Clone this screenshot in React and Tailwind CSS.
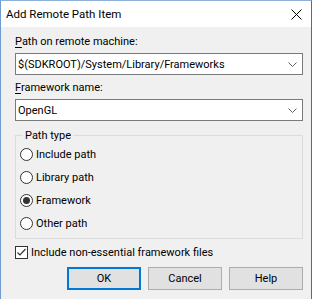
import { useState } from "react";

/* ================= SMALL CONTROLS ================= */

const Chevron = () => (
  <svg width="9" height="5" viewBox="0 0 9 5" className="shrink-0">
    <path d="M0.5 0.5 L4.5 4.5 L8.5 0.5" fill="none" stroke="#606060" strokeWidth="1" />
  </svg>
);

const ComboBox = ({ value }) => (
  <div className="h-[22px] flex items-center justify-between border border-[#7a7a7a] bg-white pl-[2px] pr-[5px]">
    <span className="truncate">{value}</span>
    <Chevron />
  </div>
);

const Radio = ({ label, checked, onClick }) => (
  <div className="h-[23px] flex items-center gap-[3px]" onClick={onClick}>
    <span className="w-[13px] h-[13px] rounded-full border border-[#333333] bg-white flex items-center justify-center shrink-0">
      {checked && <span className="w-[7px] h-[7px] rounded-full bg-[#333333]" />}
    </span>
    <span>{label}</span>
  </div>
);

const Button = ({ children, primary }) => (
  <div
    className={`w-[74px] h-[23px] flex items-center justify-center bg-[#e1e1e1] ${
      primary ? "border-2 border-[#0078d7]" : "border border-[#adadad]"
    }`}
  >
    {children}
  </div>
);

/* ================= DIALOG ================= */

export default function App() {
  const [pathType, setPathType] = useState("framework");
  const [nonEssential, setNonEssential] = useState(true);

  const types = [
    { id: "include", label: "Include path" },
    { id: "library", label: "Library path" },
    { id: "framework", label: "Framework" },
    { id: "other", label: "Other path" },
  ];

  return (
    <div
      className="w-[313px] h-[299px] overflow-hidden bg-white flex text-[11px] leading-[15px] text-black"
      style={{ fontFamily: 'Roboto, "Noto Sans", sans-serif' }}
    >
      <div className="w-[312px] h-[299px] flex flex-col border-l border-t border-r border-l-[#6f9bd0] border-t-[#8fb0d8] border-r-[#1e78d7]">
        {/* TITLE BAR */}
        <div className="h-[26px] bg-white flex items-center justify-between pl-[5px] pr-[9px] shrink-0">
          <span className="text-[11.5px] pt-[1px]">Add Remote Path Item</span>
          <svg width="11" height="11" viewBox="0 0 11 11">
            <path d="M0.5 0.5 L10.5 10.5 M10.5 0.5 L0.5 10.5" stroke="#000" strokeWidth="1" />
          </svg>
        </div>

        {/* BODY */}
        <div className="flex-1 bg-[#f0f0f0] pl-[14px] pr-[8px] pt-[7px] flex flex-col">
          <div className="mb-[4px]">
            <span className="underline underline-offset-2">P</span>ath on remote machine:
          </div>
          <ComboBox value="$(SDKROOT)/System/Library/Frameworks" />

          <div className="mt-[5px] mb-[4px]">
            <span className="underline underline-offset-2">F</span>ramework name:
          </div>
          <ComboBox value="OpenGL" />

          <fieldset className="mt-[7px] border border-[#dcdcdc] pl-[4px] pb-[3px]">
            <legend className="ml-[3px] px-[2px]">Path type</legend>
            {types.map((t) => (
              <Radio
                key={t.id}
                label={t.label}
                checked={pathType === t.id}
                onClick={() => setPathType(t.id)}
              />
            ))}
          </fieldset>

          <div
            className="mt-[7px] h-[13px] flex items-center gap-[3px]"
            onClick={() => setNonEssential(!nonEssential)}
          >
            <span className="w-[13px] h-[13px] border border-[#333333] bg-white flex items-center justify-center shrink-0">
              {nonEssential && (
                <svg width="11" height="11" viewBox="0 0 11 11">
                  <path d="M1.5 5.5 L4 8 L9.5 2" fill="none" stroke="#333" strokeWidth="1.2" />
                </svg>
              )}
            </span>
            <span>Include non-essential framework files</span>
          </div>

          <div className="mt-[8px] flex justify-end gap-[7px]">
            <Button primary>OK</Button>
            <Button>Cancel</Button>
            <Button>Help</Button>
          </div>
        </div>
      </div>
    </div>
  );
}
